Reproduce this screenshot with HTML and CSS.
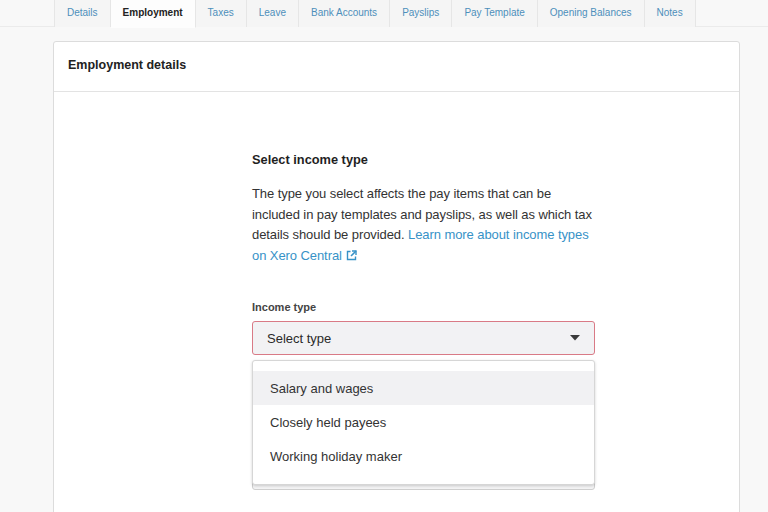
FILE: index.html
```html
<!DOCTYPE html>
<html lang="en">
<head>
<meta charset="utf-8">
<title>Employment details</title>
<link rel="stylesheet" href="styles.css">
</head>
<body>
<nav class="tabs">
  <a class="tab">Details</a>
  <a class="tab active">Employment</a>
  <a class="tab">Taxes</a>
  <a class="tab">Leave</a>
  <a class="tab">Bank Accounts</a>
  <a class="tab">Payslips</a>
  <a class="tab">Pay Template</a>
  <a class="tab">Opening Balances</a>
  <a class="tab">Notes</a>
</nav>
<main class="card">
  <header class="card-head">Employment details</header>
  <section class="card-body">
    <div class="form">
      <h2 class="title">Select income type</h2>
      <p class="desc">The type you select affects the pay items that can be included in pay templates and payslips, as well as which tax details should be provided. <a class="link">Learn more about income types on Xero Central<svg class="ext" width="11" height="11" viewBox="0 0 11 11"><path d="M4.5 1.5H1.5v8h8V6.5" fill="none" stroke="currentColor" stroke-width="1.4"/><path d="M6 1h4v4" fill="none" stroke="currentColor" stroke-width="1.4"/><path d="M10 1L5 6" stroke="currentColor" stroke-width="1.6"/></svg></a></p>
      <label class="label">Income type</label>
      <div class="field">
        <div class="select"><span>Select type</span><svg width="10" height="6" viewBox="0 0 10 6"><path d="M0 0h10L5 5.5z" fill="#3a3a3a"/></svg></div>
        <div class="under"></div>
        <ul class="menu">
          <li class="opt hover">Salary and wages</li>
          <li class="opt">Closely held payees</li>
          <li class="opt">Working holiday maker</li>
        </ul>
      </div>
    </div>
  </section>
</main>
</body>
</html>
```
FILE: styles.css
```css
* { box-sizing: border-box; }
html, body { margin: 0; height: 100%; }
body {
  background: #f8f8f8;
  font-family: "Liberation Sans", Arial, sans-serif;
  color: #2a2a2a;
  overflow: hidden;
}
.tabs {
  display: flex;
  padding-left: 54px;
  height: 27px;
  border-bottom: 1px solid #ebebeb;
}
.tab {
  display: flex;
  align-items: center;
  padding: 0 12px 2px;
  height: 27px;
  font-size: 10px;
  color: #4d8fbb;
  background: #f5f5f5;
  border-right: 1px solid #e6e6e6;
}
.tab:first-child { border-left: 1px solid #e6e6e6; }
.tab.active {
  background: #fdfdfd;
  color: #222;
  font-weight: bold;
  border-bottom: 1px solid #fdfdfd;
  height: 28px;
  padding-bottom: 3px;
}
.card {
  margin: 14px 0 0 53px;
  width: 687px;
  height: 520px;
  background: #fff;
  border: 1px solid #dcdcdc;
  border-radius: 3px;
}
.card-head {
  height: 50px;
  display: flex;
  align-items: center;
  padding: 0 0 3px 14px;
  font-size: 12.5px;
  font-weight: bold;
  color: #222;
  border-bottom: 1px solid #e3e3e3;
}
.card-body {
  padding: 60px 0 0 198px;
}
.form { width: 343px; }
.title {
  margin: 0;
  font-size: 12.8px;
  line-height: 16px;
  font-weight: bold;
  color: #1f1f1f;
}
.desc {
  margin: 16px 0 0;
  font-size: 13px;
  letter-spacing: -0.08px;
  line-height: 20.6px;
  color: #333;
}
.link { color: #3792c7; }
.ext { margin-left: 4px; vertical-align: -1px; color: #3792c7; }
.label {
  display: block;
  margin-top: 34px;
  font-size: 11px;
  line-height: 14px;
  font-weight: bold;
  color: #444;
}
.field { position: relative; margin-top: 7px; }
.select {
  height: 34px;
  display: flex;
  align-items: center;
  justify-content: space-between;
  padding: 0 14px 0 14px;
  background: #f2f2f4;
  border: 1px solid #d97a86;
  border-radius: 3px;
  font-size: 13px;
  color: #2a2a2a;
}
.under {
  margin-top: 11px;
  height: 124px;
  border: 1px solid #cfcfcf;
  border-radius: 3px;
  background: #f4f4f5;
}
.menu {
  position: absolute;
  left: 0;
  right: 0;
  top: 39px;
  margin: 0;
  padding: 10px 0 11px;
  list-style: none;
  background: #fff;
  border: 1px solid #d6d6d6;
  border-radius: 3px;
  box-shadow: 0 1px 3px rgba(0,0,0,0.18);
}
.opt {
  height: 34px;
  display: flex;
  align-items: center;
  padding-left: 17px;
  font-size: 13px;
  color: #333;
}
.opt.hover { background: #f1f1f3; }
```
